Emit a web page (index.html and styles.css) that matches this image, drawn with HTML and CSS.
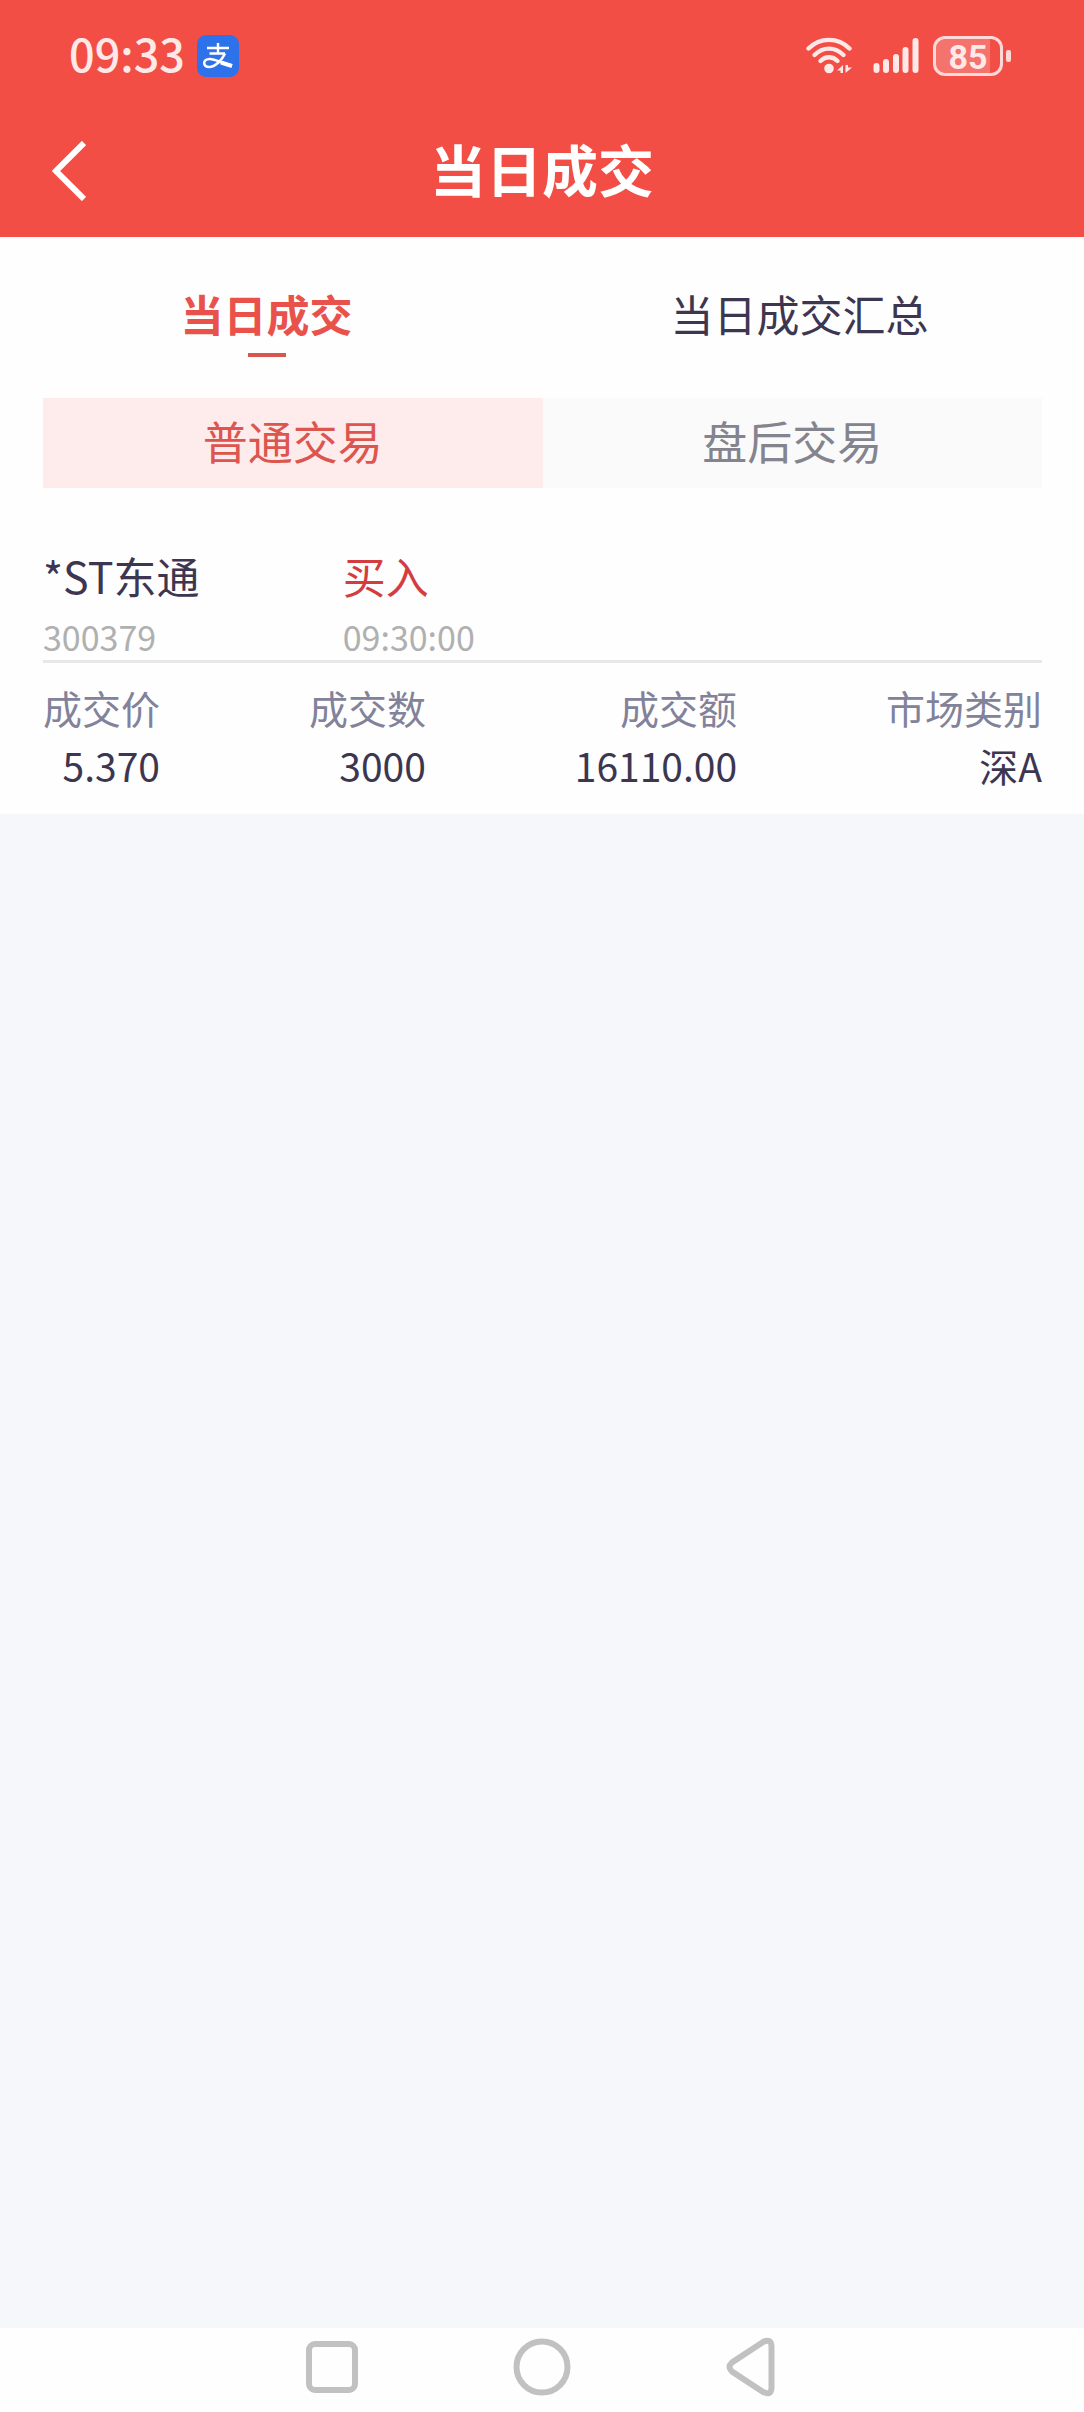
FILE: index.html
```html
<!DOCTYPE html>
<html lang="zh-CN">
<head>
    <meta charset="UTF-8">
    <meta name="viewport" content="width=device-width, initial-scale=1.0">
    <title>当日成交</title>
    <link rel="stylesheet" href="styles.css">
</head>
<body>

    <header class="header">
        <!-- Status bar -->
        <div class="status-bar">
            <span class="clock">09:33</span>
            <svg class="app-icon" width="42" height="42" viewBox="0 0 42 42" aria-hidden="true">
                <rect width="42" height="42" rx="9" fill="#2d72ea"/>
                <g fill="none" stroke="#fff" stroke-width="2.4">
                    <path d="M10 13H32M21 8V19M12.5 18.500H28"/>
                    <path d="M28 18.500C25 25 18 32 12 32C5.500 32 5.500 24 12.500 24C19 24 26 29 35 30.500" stroke-width="2.600"/>
                    <path d="M24 27.500L35 31" stroke-width="4"/>
                </g>
            </svg>
            <div class="status-icons">
                <svg width="47" height="38" viewBox="0 0 47 38" aria-hidden="true">
                    <g fill="none" stroke="#ffe9e8" stroke-width="4.400" stroke-linecap="round">
                        <path d="M2.500 11.500C14 0 32 0 43.500 11.500"/>
                        <path d="M8.500 18C17 9.500 29 9.500 37.500 18"/>
                        <path d="M14.500 24C19.500 19 26.500 19 31.500 24"/>
                    </g>
                    <circle cx="23" cy="31.500" r="4.800" fill="#ffe9e8"/>
                    <path d="M37 28V36H34.500V33.500H31ZM39.500 28V36L46 30.500H42V28Z" fill="#ffe9e8"/>
                </svg>
                <svg width="46" height="38" viewBox="0 0 46 38" aria-hidden="true">
                    <g stroke="#ffe9e8" stroke-width="6" stroke-linecap="round">
                        <path d="M3.500 29V33M13 25V33M23 20V33M32.500 13V33M42.500 4V33"/>
                    </g>
                </svg>
                <div class="battery"><span>85</span></div>
            </div>
        </div>

        <!-- Title bar -->
        <div class="title-bar">
            <button class="back" type="button" aria-label="返回">
                <svg width="34" height="60" viewBox="0 0 34 60" aria-hidden="true">
                    <path d="M32 2L4 30L32 58" fill="none" stroke="#fff" stroke-width="6"/>
                </svg>
            </button>
            <h1>当日成交</h1>
        </div>
    </header>

    <main>
        <nav class="tabs">
            <a class="tab active" href="#today">当日成交</a>
            <a class="tab" href="#summary">当日成交汇总</a>
        </nav>

        <div class="segments">
            <button class="segment active" type="button">普通交易</button>
            <button class="segment" type="button">盘后交易</button>
        </div>

        <!-- Deal record -->
        <article class="deal">
            <div class="deal-head">
                <div class="stock">
                    <h2>*ST东通</h2>
                    <p>300379</p>
                </div>
                <div class="side">
                    <strong>买入</strong>
                    <time>09:30:00</time>
                </div>
            </div>
            <dl class="deal-info">
                <div>
                    <dt>成交价</dt>
                    <dd>5.370</dd>
                </div>
                <div>
                    <dt>成交数</dt>
                    <dd>3000</dd>
                </div>
                <div>
                    <dt>成交额</dt>
                    <dd>16110.00</dd>
                </div>
                <div>
                    <dt>市场类别</dt>
                    <dd>深A</dd>
                </div>
            </dl>
        </article>
    </main>

    <!-- System navigation -->
    <footer class="system-nav">
        <button type="button" aria-label="最近任务">
            <svg width="60" height="60" viewBox="0 0 60 60">
                <rect x="7" y="7" width="46" height="46" rx="6"/>
            </svg>
        </button>
        <button type="button" aria-label="主屏幕">
            <svg width="60" height="60" viewBox="0 0 60 60">
                <circle cx="30" cy="30" r="25.500"/>
            </svg>
        </button>
        <button type="button" aria-label="返回">
            <svg width="60" height="60" viewBox="0 0 60 60">
                <path d="M41 5Q49 1 49.500 9V51Q49 59 41 55L10 34.500Q5 30 10 25.500Z"/>
            </svg>
        </button>
    </footer>

</body>
</html>
```
FILE: styles.css
```css
* {
    box-sizing: border-box;
}
body {
    font-family: "Noto Sans CJK SC", sans-serif;
    color: #3d3651;
    background-color: #f6f7fa;
    margin: 0;
    min-height: 100vh;
    display: flex;
    flex-direction: column;
}
h1, h2, p, dl, dd {
    margin: 0;
    font-weight: normal;
}
button {
    font-family: inherit;
    border: none;
    padding: 0;
    background: none;
    cursor: pointer;
}
svg {
    display: block;
}

/* Header */
.header {
    background-color: #f24e46;
    color: white;
}
.status-bar {
    display: flex;
    align-items: center;
    height: 112px;
    padding: 0 81px 0 69px;
}
.clock {
    color: #ffe9e8;
    font-size: 45px;
    line-height: 48px;
    font-weight: 500;
    padding-bottom: 6px;
}
.app-icon {
    margin-left: 12px;
}
.status-icons {
    display: flex;
    align-items: center;
    gap: 20px;
    margin-left: auto;
}
.battery {
    position: relative;
    width: 70px;
    height: 40px;
    margin-left: -6px;
    border: 3px solid #ffd9d7;
    border-radius: 12px;
    background: linear-gradient(to right, #f4736d 85%, transparent 85%);
    color: #ffe9e8;
    font-family: Roboto, sans-serif;
    font-size: 34px;
    font-weight: bold;
    line-height: 36px;
    text-align: center;
}
.battery::after {
    content: "";
    position: absolute;
    top: 11px;
    right: -11px;
    width: 5px;
    height: 12px;
    border-radius: 2px;
    background-color: #ffd9d7;
}
.title-bar {
    display: grid;
    grid-template-columns: 1fr auto 1fr;
    align-items: center;
    height: 125px;
    padding: 0 52px 8px;
}
.back {
    justify-self: start;
}
.title-bar h1 {
    font-size: 56px;
    line-height: 64px;
    font-weight: bold;
    padding-bottom: 6px;
}

/* Tabs */
main {
    background-color: #fefefe;
}
.tabs {
    display: flex;
    padding: 48px 18px 41px 0;
}
.tab {
    flex: 1;
    color: #3d3651;
    font-size: 43px;
    line-height: 56px;
    text-align: center;
    text-decoration: none;
}
.tab.active {
    color: #e9524a;
    font-weight: bold;
}
.tab.active::after {
    content: "";
    display: block;
    width: 38px;
    height: 4px;
    margin: 12px auto 0;
    background-color: #d9564f;
}
.segments {
    display: flex;
    margin: 0 42px 0 43px;
}
.segment {
    flex: 1;
    height: 90px;
    padding-bottom: 5px;
    font-size: 45px;
    color: #84848f;
    background-color: #fafafa;
}
.segment.active {
    color: #dc554e;
    background-color: #feebeb;
}

/* Deal record */
.deal {
    padding: 57px 42px 20px 43px;
}
.deal-head {
    display: flex;
    padding-bottom: 3px;
    border-bottom: 3px solid #e8e8e8;
}
.stock {
    width: 30%;
}
.deal-head h2, .side strong {
    display: block;
    font-size: 43px;
    font-weight: normal;
    line-height: 60px;
}
.side strong {
    color: #d33d40;
}
.deal-head p, .deal-head time {
    display: block;
    color: #b0b0b0;
    font-size: 34px;
    line-height: 40px;
    margin: 12px 0 0;
}
.deal-info {
    display: flex;
    justify-content: space-between;
    padding-top: 15px;
    text-align: right;
}
.deal-info dt, .deal-info dd {
    font-size: 39px;
    line-height: 58px;
}
.deal-info dt {
    color: #82829a;
}

/* System navigation */
.system-nav {
    display: flex;
    justify-content: center;
    gap: 150px;
    margin-top: auto;
    padding: 9px 0 15px;
    background-color: #fefefe;
}
.system-nav svg {
    fill: none;
    stroke: #c1c1c1;
    stroke-width: 6;
}
```
